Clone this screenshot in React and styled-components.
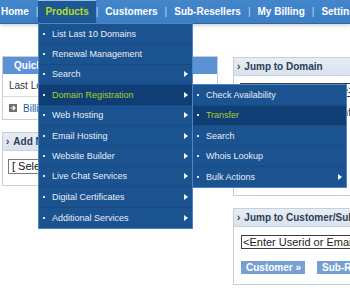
import React from "react";
import styled, { createGlobalStyle } from "styled-components";

const GlobalStyle = createGlobalStyle`
  html, body {
    margin: 0;
    padding: 0;
    overflow: hidden;
    background: #fff;
  }
  body {
    font-family: "Liberation Sans", Arial, sans-serif;
  }
`;

const Page = styled.div`
  position: relative;
  width: 350px;
  height: 288px;
  overflow: hidden;
`;

const NavBar = styled.div`
  position: relative;
  z-index: 2;
  display: flex;
  height: 23px;
  background: linear-gradient(#4386ca, #3b7ec4);
  border-bottom: 1px solid #2a65a5;
  box-shadow: 0 2px 3px rgba(0, 0, 0, 0.16);
  white-space: nowrap;
`;

const NavItem = styled.div`
  position: relative;
  display: flex;
  align-items: center;
  padding: 0 7px;
  font-size: 10px;
  font-weight: bold;
  color: ${p => (p.active ? "#b3df2a" : "#ffffff")};
  background: ${p => (p.active ? "#1d5794" : "transparent")};
  box-shadow: ${p => (p.active ? "inset 0 1px 0 #9cc2ea" : "none")};
  &:first-child {
    padding-left: 1px;
  }
`;

const Sep = styled.span`
  display: flex;
  align-items: center;
  font-size: 10px;
  color: #c3d9f1;
`;

const Menu = styled.ul`
  position: absolute;
  z-index: 3;
  top: ${p => (p.sub ? "-1px" : "100%")};
  left: ${p => (p.sub ? "100%" : "0")};
  width: 155px;
  margin: 0;
  padding: 0;
  list-style: none;
  box-sizing: border-box;
  background: #1b5290;
  border: 1px solid #4b86c6;
`;

const MenuItem = styled.li`
  position: relative;
  display: flex;
  align-items: center;
  height: 20.4px;
  box-sizing: border-box;
  padding: 0 4px;
  border-bottom: 1px solid #174a83;
  font-size: 9px;
  font-weight: normal;
  color: ${p => (p.hot ? "#a3d22c" : "#e8eef6")};
  background: ${p => (p.hot ? "#0f3e74" : "transparent")};
  &:last-child {
    border-bottom: none;
  }
`;

const Bullet = styled.span`
  width: 2px;
  height: 2px;
  margin-right: 6.5px;
  background: #dfe8f3;
  flex-shrink: 0;
`;

const Arrow = styled.span`
  margin-left: auto;
  width: 0;
  height: 0;
  border-left: 4px solid #ffffff;
  border-top: 3px solid transparent;
  border-bottom: 3px solid transparent;
`;

const Content = styled.div`
  display: flex;
  align-items: flex-start;
  gap: 15px;
  padding: 32px 0 0 2px;
`;

const Column = styled.div`
  display: flex;
  flex-direction: column;
  gap: 12px;
  flex-shrink: 0;
  width: ${p => p.w}px;
  padding-top: ${p => p.offset || 0}px;
`;

const Card = styled.div`
  border: 1px solid #c9cfd6;
  background: #fff;
`;

const BlueHeader = styled.div`
  height: 17px;
  display: flex;
  align-items: center;
  padding-left: 11px;
  background: #5b92d5;
  color: #fff;
  font-size: 10px;
  font-weight: bold;
`;

const LightHeader = styled.div`
  height: 17px;
  display: flex;
  align-items: center;
  gap: 4px;
  padding-left: 3px;
  background: linear-gradient(#e6edf5, #d9e3ee);
  border-bottom: 1px solid #c9d4e0;
  color: #2b3d55;
  font-size: 10px;
  font-weight: bold;
  white-space: nowrap;
`;

const Chevron = styled.span`
  font-size: 10px;
  font-weight: bold;
  color: #2b3d55;
`;

const Row = styled.div`
  height: 22px;
  display: flex;
  align-items: center;
  gap: 6px;
  padding-left: 6px;
  border-top: ${p => (p.first ? "none" : "1px solid #d8dde3")};
  font-size: 10px;
  color: ${p => (p.link ? "#2358a0" : "#333")};
  white-space: nowrap;
`;

const Body = styled.div`
  display: flex;
  flex-direction: column;
  gap: ${p => p.gap || 8}px;
  height: ${p => p.h}px;
  box-sizing: border-box;
  padding: ${p => p.pad};
`;

const SelectBox = styled.div`
  height: 15px;
  width: 190px;
  box-sizing: border-box;
  border: 1px solid #7b7b7b;
  padding-left: 3px;
  font-size: 11px;
  line-height: 13px;
  color: #111;
  white-space: nowrap;
`;

const TextInput = styled.div`
  height: 14px;
  width: 205px;
  box-sizing: border-box;
  border: 1px solid #3d3d3d;
  padding-left: 1px;
  font-size: 11px;
  line-height: 12px;
  color: #222;
  white-space: nowrap;
  overflow: hidden;
`;

const ButtonRow = styled.div`
  display: flex;
  gap: 12px;
`;

const Button = styled.div`
  height: 13px;
  display: flex;
  align-items: center;
  padding: 0 4px 0 5px;
  background: #789fd3;
  color: #fff;
  font-size: 10px;
  font-weight: bold;
  white-space: nowrap;
`;

const Checks = styled.div`
  display: flex;
  flex-wrap: wrap;
  gap: 8px 14px;
  font-size: 10px;
  color: #333;
`;

const BillIcon = () => (
  <svg width="8" height="8" viewBox="0 0 8 8">
    <rect width="8" height="8" fill="#6f6f6f" />
    <path d="M1.5 4h4M4 2l2 2-2 2" stroke="#fff" strokeWidth="1.2" fill="none" />
  </svg>
);

const productItems = [
  { label: "List Last 10 Domains" },
  { label: "Renewal Management" },
  { label: "Search", more: true },
  { label: "Domain Registration", more: true, hot: true, open: true },
  { label: "Web Hosting", more: true },
  { label: "Email Hosting", more: true },
  { label: "Website Builder", more: true },
  { label: "Live Chat Services", more: true },
  { label: "Digital Certificates", more: true },
  { label: "Additional Services", more: true },
];

const domainItems = [
  { label: "Check Availability" },
  { label: "Transfer", hot: true },
  { label: "Search" },
  { label: "Whois Lookup" },
  { label: "Bulk Actions", more: true },
];

const MenuList = ({ items, sub, children }) => (
  <Menu sub={sub}>
    {items.map(item => (
      <MenuItem key={item.label} hot={item.hot}>
        <Bullet />
        {item.label}
        {item.more && <Arrow />}
        {item.open && children}
      </MenuItem>
    ))}
  </Menu>
);

const navLinks = ["Home", "Products", "Customers", "Sub-Resellers", "My Billing", "Settings"];

export default function App() {
  return (
    <Page>
      <GlobalStyle />
      <NavBar>
        {navLinks.map((link, i) => (
          <React.Fragment key={link}>
            {i > 0 && <Sep>|</Sep>}
            <NavItem active={link === "Products"}>
              {link}
              {link === "Products" && (
                <MenuList items={productItems}>
                  <MenuList items={domainItems} sub />
                </MenuList>
              )}
            </NavItem>
          </React.Fragment>
        ))}
      </NavBar>

      <Content>
        <Column w={216}>
          <Card>
            <BlueHeader>Quick Links</BlueHeader>
            <Row first>Last Login: 12 Mar 2009</Row>
            <Row link>
              <BillIcon />
              Billing Summary
            </Row>
          </Card>
          <Card>
            <LightHeader>
              <Chevron>›</Chevron>
              Add New Order
            </LightHeader>
            <Body h={34} pad="8px 0 0 5px">
              <SelectBox>[ Select a Product ]</SelectBox>
            </Body>
          </Card>
        </Column>

        <Column w={230} offset={1}>
          <Card>
            <LightHeader>
              <Chevron>›</Chevron>
              Jump to Domain
            </LightHeader>
            <Body h={119} pad="7px 0 0 6px" gap={10}>
              <TextInput>&lt;Enter Domain Name&gt;</TextInput>
              <Checks>
                <span>.com</span>
                <span>.net</span>
                <span>.org</span>
                <span>.info</span>
              </Checks>
              <ButtonRow>
                <Button>Go »</Button>
              </ButtonRow>
            </Body>
          </Card>
          <Card>
            <LightHeader>
              <Chevron>›</Chevron>
              Jump to Customer/Sub-Reseller
            </LightHeader>
            <Body h={57} pad="8px 0 0 7px" gap={12}>
              <TextInput>&lt;Enter Userid or Email Address&gt;</TextInput>
              <ButtonRow>
                <Button>Customer »</Button>
                <Button>Sub-Reseller »</Button>
              </ButtonRow>
            </Body>
          </Card>
        </Column>
      </Content>
    </Page>
  );
}
